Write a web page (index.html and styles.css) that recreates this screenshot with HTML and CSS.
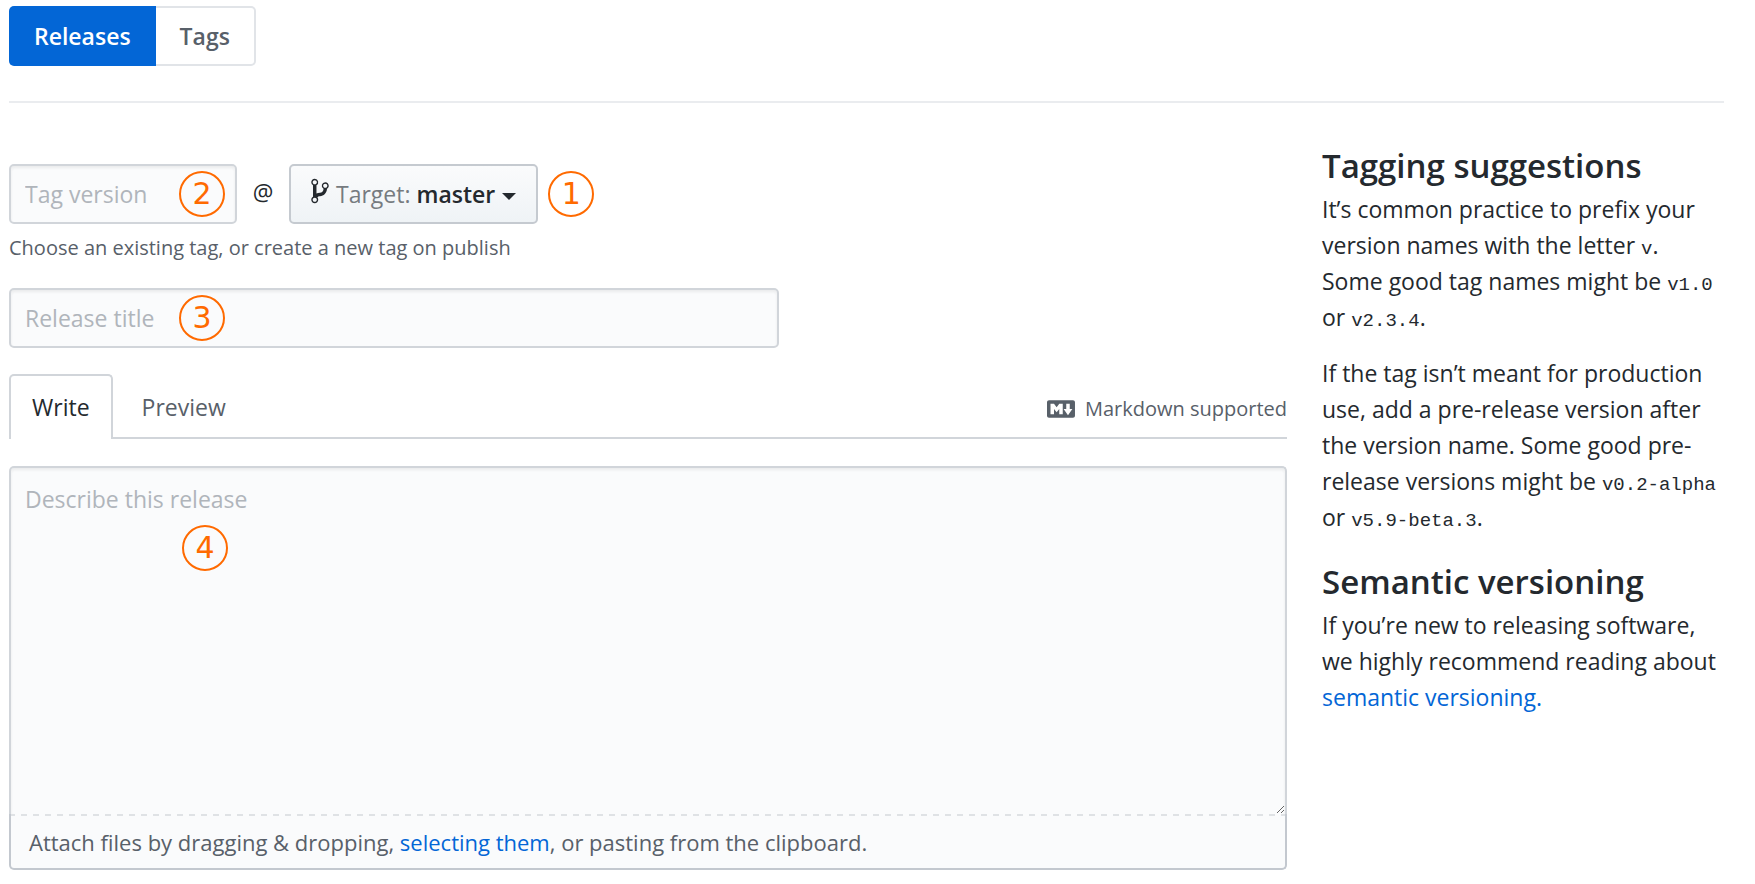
FILE: index.html
```html
<!DOCTYPE html>
<html lang="en">
<head>
    <meta charset="UTF-8">
    <meta name="viewport" content="width=device-width, initial-scale=1.0">
    <title>New release</title>
    <link rel="stylesheet" href="styles.css">
</head>
<body>

    <nav class="subnav">
        <a href="#releases" class="subnav-item selected">Releases</a>
        <a href="#tags" class="subnav-item">Tags</a>
    </nav>

    <div class="release-page">
        <form class="release-form">
            <div class="tag-row">
                <div class="field tag-field">
                    <input type="text" id="tag" class="form-control" placeholder="Tag version" aria-label="Tag version">
                    <span class="step step-tag">2</span>
                </div>
                <span class="at">@</span>
                <button type="button" class="target-btn">
                    <svg class="branch-icon" viewBox="0 0 10 16" aria-hidden="true"><path fill-rule="evenodd" d="M10 5c0-1.11-.89-2-2-2a1.993 1.993 0 0 0-1 3.72v.3c-.02.52-.23.98-.63 1.38-.4.4-.86.61-1.38.63-.83.02-1.48.16-2 .45V4.72a1.993 1.993 0 0 0-1-3.72C.88 1 0 1.89 0 3a2 2 0 0 0 1 1.72v6.56c-.59.35-1 .99-1 1.72 0 1.11.89 2 2 2 1.11 0 2-.89 2-2 0-.53-.2-1-.53-1.36.09-.06.48-.41.59-.47.25-.11.56-.17.94-.17 1.05-.05 1.95-.45 2.75-1.25S8.95 7.77 9 6.73h-.02C9.59 6.37 10 5.73 10 5zM2 1.8c.66 0 1.2.55 1.2 1.2 0 .65-.55 1.2-1.2 1.2C1.35 4.2.8 3.65.8 3c0-.65.55-1.2 1.2-1.2zm0 12.41c-.66 0-1.2-.55-1.2-1.2 0-.65.55-1.2 1.2-1.2.65 0 1.2.55 1.2 1.2 0 .65-.55 1.2-1.2 1.2zm6-8c-.66 0-1.2-.55-1.2-1.2 0-.65.55-1.2 1.2-1.2.65 0 1.2.55 1.2 1.2 0 .65-.55 1.2-1.2 1.2z"/></svg>
                    <span class="target-label">Target:</span>
                    <span class="target-name">master</span>
                    <span class="caret"></span>
                </button>
                <span class="step">1</span>
            </div>
            <p class="tag-note">Choose an existing tag, or create a new tag on publish</p>

            <div class="field title-field">
                <input type="text" id="title" class="form-control" placeholder="Release title" aria-label="Release title">
                <span class="step step-title">3</span>
            </div>

            <div class="tabs">
                <button type="button" class="tab active">Write</button>
                <button type="button" class="tab">Preview</button>
                <a href="#markdown" class="markdown">
                    <svg class="markdown-icon" viewBox="0 3 16 10" aria-hidden="true"><path fill-rule="evenodd" d="M14.85 3H1.15C.52 3 0 3.52 0 4.15v7.69C0 12.48.52 13 1.15 13h13.69c.64 0 1.15-.52 1.15-1.15v-7.7C16 3.52 15.48 3 14.85 3zM9 11H7V8L5.5 9.92 4 8v3H2V5h2l1.5 2L7 5h2v6zm2.99.5L9.5 8H11V5h2v3h1.5l-2.51 3.5z"/></svg>
                    Markdown supported
                </a>
            </div>

            <div class="field">
                <textarea id="body" class="form-control body-input" placeholder="Describe this release" aria-label="Describe this release"></textarea>
                <p class="attach">Attach files by dragging &amp; dropping, <a href="#files">selecting them</a>, or pasting from the clipboard.</p>
                <span class="step step-body">4</span>
            </div>
        </form>

        <aside class="sidebar">
            <h2>Tagging suggestions</h2>
            <p>It’s common practice to prefix your version names with the letter <code>v</code>.<br>Some good tag names might be <code>v1.0</code> or <code>v2.3.4</code>.</p>
            <p>If the tag isn’t meant for production use, add a pre-release version after the version name. Some good pre-release versions might be <code>v0.2-alpha</code> or <code>v5.9-beta.3</code>.</p>
            <h2>Semantic versioning</h2>
            <p>If you’re new to releasing software, we highly recommend reading about <a href="#semver">semantic versioning.</a></p>
        </aside>
    </div>

</body>
</html>
```
FILE: styles.css
```css
* {
    margin: 0;
    padding: 0;
    box-sizing: border-box;
}

body {
    padding: 6px 31px 12px 9px;
    background: #fff;
    color: #24292e;
    font-family: 'Open Sans', sans-serif;
    font-size: 23px;
    line-height: 36px;
}

a {
    color: #0366d6;
    text-decoration: none;
}

button, input, textarea {
    font: inherit;
}

.subnav {
    display: flex;
    padding-bottom: 35px;
    border-bottom: 2px solid #eaecef;
}

.subnav-item {
    padding: 10px 24px;
    border: 2px solid #e1e4e8;
    border-left: none;
    border-radius: 0 5px 5px 0;
    color: #586069;
    font-weight: 600;
}

.subnav-item.selected {
    padding: 12px 25px;
    border: none;
    border-radius: 5px 0 0 5px;
    background: #0366d6;
    color: #fff;
}

.release-page {
    display: grid;
    grid-template-columns: 1fr 402px;
    gap: 35px;
}

.release-form {
    padding-top: 61px;
}

.field {
    position: relative;
}

.form-control {
    display: block;
    width: 100%;
    height: 60px;
    padding: 0 14px;
    border: 2px solid #d1d5da;
    border-radius: 5px;
    background: #fafbfc;
    box-shadow: inset 0 2px 3px rgba(27, 31, 35, 0.07);
    color: #24292e;
    outline: none;
}

.form-control::placeholder {
    color: #b0b5bb;
    opacity: 1;
}

.tag-row {
    display: flex;
    align-items: center;
}

.tag-field {
    width: 228px;
}

.at {
    width: 52px;
    padding-bottom: 4px;
    text-align: center;
}

.target-btn {
    display: flex;
    align-items: center;
    height: 60px;
    margin-right: 10px;
    padding: 0 20px;
    border: 2px solid #c5cad0;
    border-radius: 5px;
    background: linear-gradient(#fafbfc, #eff3f6);
    cursor: pointer;
}

.branch-icon {
    width: 18px;
    height: 28px;
    margin: 0 7px 6px 0;
    fill: #24292e;
}

.target-label {
    margin-right: 6px;
    color: #767b80;
    font-weight: 500;
}

.target-name {
    color: #24292e;
    font-weight: 600;
}

.caret {
    margin: 4px 0 0 7px;
    border: 7px solid transparent;
    border-top-color: #24292e;
    border-bottom: none;
}

/* numbered markers */
.step {
    display: flex;
    justify-content: center;
    align-items: center;
    width: 46px;
    height: 46px;
    border: 2px solid #ff6a00;
    border-radius: 50%;
    color: #ff6a00;
    font-family: 'DejaVu Sans', sans-serif;
    font-size: 30px;
}

.step-tag,
.step-title,
.step-body {
    position: absolute;
    top: 7px;
    left: 170px;
}

.step-body {
    top: 59px;
    left: 173px;
}

.tag-note {
    padding: 6px 0 22px;
    color: #586069;
    font-size: 20px;
}

.title-field {
    width: 770px;
    max-width: 100%;
}

.tabs {
    display: flex;
    align-items: flex-end;
    gap: 6px;
    margin: 26px 0 27px;
    border-bottom: 2px solid #d1d5da;
}

.tab {
    height: 63px;
    padding: 0 21px;
    border: 2px solid transparent;
    border-bottom: none;
    background: none;
    color: #586069;
    cursor: pointer;
}

.tab.active {
    height: 65px;
    margin-bottom: -2px;
    padding-bottom: 2px;
    border-color: #d1d5da;
    border-radius: 5px 5px 0 0;
    background: #fff;
    color: #24292e;
}

.markdown {
    display: flex;
    align-items: center;
    gap: 10px;
    margin: 0 0 10px auto;
    color: #586069;
    font-size: 20px;
}

.markdown-icon {
    width: 28px;
    height: 18px;
    fill: #586069;
}

.body-input {
    height: 348px;
    padding: 13px 14px;
    border-bottom: none;
    border-radius: 5px 5px 0 0;
    resize: vertical;
}

/* dashed divider on the top edge */
.attach {
    padding: 10px 18px 8px;
    border: 2px solid #c3c8cf;
    border-top: none;
    border-radius: 0 0 5px 5px;
    background: repeating-linear-gradient(90deg, #dfe2e5 0 4px, #fafbfc 4px 10px, #dfe2e5 10px 12px) top / 100% 2px no-repeat #fafbfc;
    color: #586069;
    font-size: 22px;
}

.sidebar {
    padding-top: 36px;
}

.sidebar h2 {
    margin: 4px 0 2px;
    font-size: 33px;
    font-weight: 600;
    line-height: 46px;
}

.sidebar p {
    margin-bottom: 20px;
}

.sidebar p + h2 {
    margin-top: 24px;
}

.sidebar code {
    font-family: 'Liberation Mono', monospace;
    font-size: 19px;
    line-height: 20px;
    white-space: nowrap;
}
```
